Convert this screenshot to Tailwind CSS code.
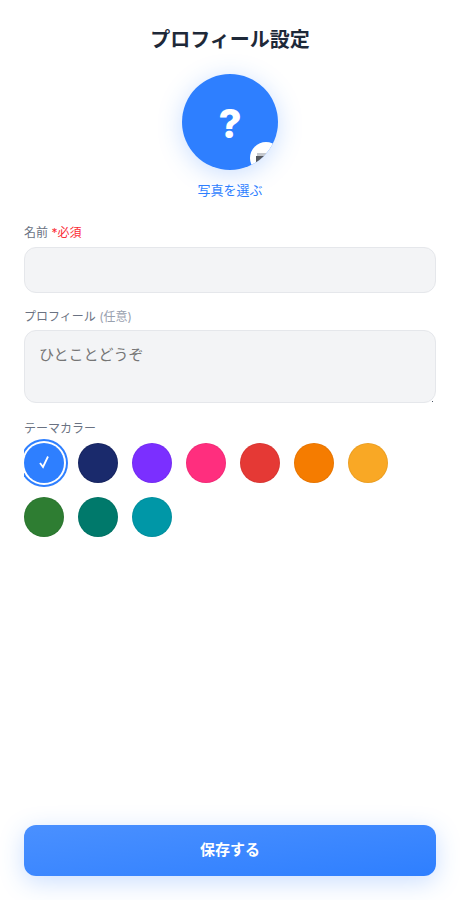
<!DOCTYPE html>
<html lang="ja">
<head>
    <meta charset="UTF-8">
    <meta name="viewport" content="width=device-width, initial-scale=1.0">
    <title>プロフィール設定</title>
    <script src="https://cdn.jsdelivr.net/npm/@tailwindcss/browser@4"></script>
</head>
<body class="bg-white font-['Inter','Noto_Sans_CJK_JP',sans-serif]">
    <div class="h-[900px] flex flex-col px-6 overflow-hidden">
        <!-- Header -->
        <h1 class="mt-[25px] h-[30px] text-center text-[20px] leading-[30px] font-bold text-gray-800">プロフィール設定</h1>

        <!-- Avatar -->
        <div class="mt-[19px] flex flex-col items-center">
            <div class="relative w-24 h-24 rounded-full overflow-hidden bg-[#2e7fff] flex items-center justify-center pt-1 text-white text-[40px] font-extrabold shadow-[0_4px_24px_rgba(46,127,255,0.25)]">
                ?
                <div class="absolute left-[68px] top-[68px] w-8 h-8 rounded-full bg-white flex justify-center pt-[11px]">
                    <svg class="w-4 h-3 -ml-[6px]" viewBox="0 0 16 12">
                        <rect x="2" y="0" width="10" height="3" fill="#c4c7cc"></rect>
                        <rect x="1" y="3" width="13" height="9" fill="#55585e"></rect>
                    </svg>
                </div>
            </div>
            <span class="mt-[10px] text-[13px] leading-[20px] text-[#2e7fff]">写真を選ぶ</span>
        </div>

        <!-- Form -->
        <label class="mt-[23px] text-[12px] leading-[20px] text-gray-500">名前 <span class="text-red-500">*必須</span></label>
        <input type="text" class="mt-[4px] h-[46px] rounded-xl border border-gray-200 bg-gray-100 px-4 outline-none">

        <label class="mt-[14px] text-[12px] leading-[20px] text-gray-500">プロフィール <span class="text-gray-400">(任意)</span></label>
        <div class="relative mt-[3px] flex">
            <textarea placeholder="ひとことどうぞ" class="w-full h-[73px] resize-none rounded-xl border border-gray-200 bg-gray-100 px-[14px] py-[13px] text-[15px] leading-[22px] outline-none placeholder:text-[#757575]"></textarea>
            <span class="absolute right-[3px] bottom-[1px] w-px h-px bg-gray-600"></span>
        </div>

        <label class="mt-[16px] text-[12px] leading-[20px] text-gray-500">テーマカラー</label>
        <div class="-mt-px flex flex-wrap gap-[14px] overflow-hidden pt-[5px] pb-[5px] pr-[5px]">
            <div class="w-10 h-10 rounded-full bg-[#2e7fff] flex items-center justify-center shadow-[0_0_0_2px_#fff,0_0_0_4px_#2e7fff]">
                <svg class="w-4 h-4" viewBox="0 0 16 16" fill="none" stroke="#fff" stroke-width="1.8"><path d="M4 8 7 12 12 1.5"></path></svg>
            </div>
            <div class="w-10 h-10 rounded-full border border-black/10 bg-[#1a2a6c]"></div>
            <div class="w-10 h-10 rounded-full border border-black/5 bg-[#7b2fff]"></div>
            <div class="w-10 h-10 rounded-full border border-black/5 bg-[#ff2e7e]"></div>
            <div class="w-10 h-10 rounded-full border border-black/5 bg-[#e53935]"></div>
            <div class="w-10 h-10 rounded-full border border-black/5 bg-[#f57c00]"></div>
            <div class="w-10 h-10 rounded-full border border-black/5 bg-[#f9a825]"></div>
            <div class="w-10 h-10 rounded-full border border-black/5 bg-[#2e7d32]"></div>
            <div class="w-10 h-10 rounded-full border border-black/5 bg-[#00796b]"></div>
            <div class="w-10 h-10 rounded-full border border-black/5 bg-[#0097a7]"></div>
        </div>

        <!-- Save -->
        <button class="mt-auto mb-[24px] h-[51px] rounded-xl bg-gradient-to-br from-[#4a90ff] to-[#2e7fff] text-white text-[15px] font-bold shadow-[0_6px_24px_rgba(46,127,255,0.25)]">保存する</button>
    </div>
</body>
</html>
